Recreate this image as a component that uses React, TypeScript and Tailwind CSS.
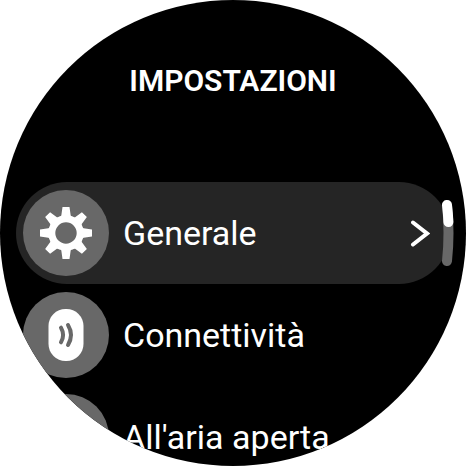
import type { ReactNode } from 'react';

interface SettingItem {
  label: string;
  icon?: ReactNode;
  active?: boolean;
}

const GEAR_ANGLES = [0, 45, 90, 135, 180, 225, 270, 315];

const GearIcon = () => (
  <svg className="h-[54px] w-[54px]" viewBox="-27 -27 54 54" aria-hidden="true">
    <circle r="14.2" fill="none" stroke="white" strokeWidth="7" />
    {GEAR_ANGLES.map((angle) => (
      <path
        key={angle}
        d="M-3.5 -26h7l1.2 8.4q0.3 1.4 2 2l-2 1.6h-9.4l-2 -1.6q1.7 -0.6 2 -2z"
        fill="white"
        transform={`rotate(${angle})`}
      />
    ))}
  </svg>
);

const SensorIcon = () => (
  <svg className="h-[54px] w-[54px]" viewBox="-27 -27 54 54" aria-hidden="true">
    <rect x="-17.5" y="-26" width="35" height="52" rx="17" fill="white" />
    <path
      d="M-5 -7.3Q-0.8 0 -5 7.3M2 -10Q8 0 2 10"
      fill="none"
      stroke="#686868"
      strokeWidth="4"
      strokeLinecap="round"
    />
  </svg>
);

const ChevronIcon = () => (
  <svg className="h-7 w-5" viewBox="0 0 20 28" aria-hidden="true">
    <path
      d="M3 3.5L17 14.5L3 25.5"
      fill="none"
      stroke="white"
      strokeWidth="4"
      strokeLinecap="round"
    />
  </svg>
);

const ScrollIndicator = () => (
  <svg
    className="absolute top-1/2 right-3 h-[68px] w-3 -translate-y-1/2"
    viewBox="0 0 12 68"
    aria-hidden="true"
  >
    <path
      d="M5 6Q8 34 5 62"
      fill="none"
      stroke="#686868"
      strokeWidth="10"
      strokeLinecap="round"
    />
    <path
      d="M5 6Q6 14 6.4 23"
      fill="none"
      stroke="white"
      strokeWidth="10"
      strokeLinecap="round"
    />
  </svg>
);

const items: SettingItem[] = [
  { label: 'Generale', icon: <GearIcon />, active: true },
  { label: 'Connettività', icon: <SensorIcon /> },
  { label: "All'aria aperta" },
];

const SettingRow = ({ label, icon, active }: SettingItem) => (
  <button
    type="button"
    className={`flex w-full items-center rounded-full py-2 pr-5 pl-[7px] text-left ${
      active ? 'bg-[#252525]' : ''
    }`}
  >
    <span className="flex h-[86px] w-[86px] shrink-0 items-center justify-center rounded-full bg-[#686868]">
      {icon}
    </span>
    <span className="ml-[14px] grow text-[34px] leading-10 whitespace-nowrap">
      {label}
    </span>
    {active && <ChevronIcon />}
  </button>
);

export default function App() {
  return (
    <main className="relative aspect-square w-full overflow-hidden rounded-full bg-black font-['Roboto',sans-serif] text-white">
      <h1 className="pt-[61px] text-center text-[30px] leading-10 font-semibold">
        IMPOSTAZIONI
      </h1>
      <ul className="mt-[81px] px-4">
        {items.map((item) => (
          <li key={item.label}>
            <SettingRow {...item} />
          </li>
        ))}
      </ul>
      <ScrollIndicator />
    </main>
  );
}
